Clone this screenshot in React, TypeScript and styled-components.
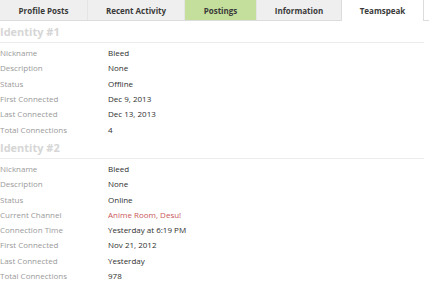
import styled, { createGlobalStyle } from 'styled-components';

const GlobalStyle = createGlobalStyle`
  body {
    margin: 0;
    background: #fff;
    font-family: "Open Sans", "DejaVu Sans", sans-serif;
  }
`;

const Page = styled.div`
  width: 429px;
  height: 300px;
  overflow: hidden;
`;

const TabBar = styled.ul`
  display: flex;
  margin: 0;
  padding: 0;
  list-style: none;
  height: 20px;
  border-bottom: 1px solid #dcdcdc;
`;

const Tab = styled.li<{ $w: number; $active?: boolean; $green?: boolean }>`
  width: ${(p) => p.$w}px;
  height: ${(p) => (p.$active ? 21 : 20)}px;
  box-sizing: border-box;
  display: flex;
  align-items: center;
  justify-content: center;
  font-size: 8px;
  font-weight: 700;
  color: #3a3a3a;
  background: ${(p) => (p.$active ? '#fff' : p.$green ? '#c4df9b' : '#efefef')};
  border-left: 1px solid ${(p) => (p.$active ? '#dcdcdc' : '#e4e4e4')};
  border-right: ${(p) => (p.$active ? '1px solid #dcdcdc' : 'none')};
  padding-bottom: ${(p) => (p.$active ? 1 : 0)}px;
  &:first-child {
    border-left: none;
  }
`;

const Content = styled.div`
  width: 424px;
`;

const Heading = styled.h3`
  margin: 0;
  padding: 3px 0 2px;
  line-height: 16px;
  font-size: 11px;
  font-weight: 700;
  color: #d6d6d6;
  border-bottom: 1px solid #ececec;
`;

const Rows = styled.dl`
  margin: 0;
  padding-top: 2px;
`;

const Row = styled.div`
  display: grid;
  grid-template-columns: 108px 1fr;
  height: 15.3px;
  align-items: center;
  font-size: 8px;
`;

const Label = styled.dt`
  color: #9a9a9a;
`;

const Value = styled.dd<{ $red?: boolean }>`
  margin: 0;
  color: ${(p) => (p.$red ? '#c9575a' : '#2f2f2f')};
`;

type Item = [string, string, boolean?];

const identities: { title: string; items: Item[] }[] = [
  {
    title: 'Identity #1',
    items: [
      ['Nickname', 'Bleed'],
      ['Description', 'None'],
      ['Status', 'Offline'],
      ['First Connected', 'Dec 9, 2013'],
      ['Last Connected', 'Dec 13, 2013'],
      ['Total Connections', '4'],
    ],
  },
  {
    title: 'Identity #2',
    items: [
      ['Nickname', 'Bleed'],
      ['Description', 'None'],
      ['Status', 'Online'],
      ['Current Channel', 'Anime Room, Desu!', true],
      ['Connection Time', 'Yesterday at 6:19 PM'],
      ['First Connected', 'Nov 21, 2012'],
      ['Last Connected', 'Yesterday'],
      ['Total Connections', '978'],
    ],
  },
];

export default function App() {
  return (
    <Page>
      <GlobalStyle />
      <TabBar>
        <Tab $w={87}>Profile Posts</Tab>
        <Tab $w={97}>Recent Activity</Tab>
        <Tab $w={72} $green>
          Postings
        </Tab>
        <Tab $w={85}>Information</Tab>
        <Tab $w={83} $active>
          Teamspeak
        </Tab>
      </TabBar>
      <Content>
        {identities.map((id) => (
          <section key={id.title}>
            <Heading>{id.title}</Heading>
            <Rows>
              {id.items.map(([label, value, red]) => (
                <Row key={label}>
                  <Label>{label}</Label>
                  <Value $red={red}>{value}</Value>
                </Row>
              ))}
            </Rows>
          </section>
        ))}
      </Content>
    </Page>
  );
}
